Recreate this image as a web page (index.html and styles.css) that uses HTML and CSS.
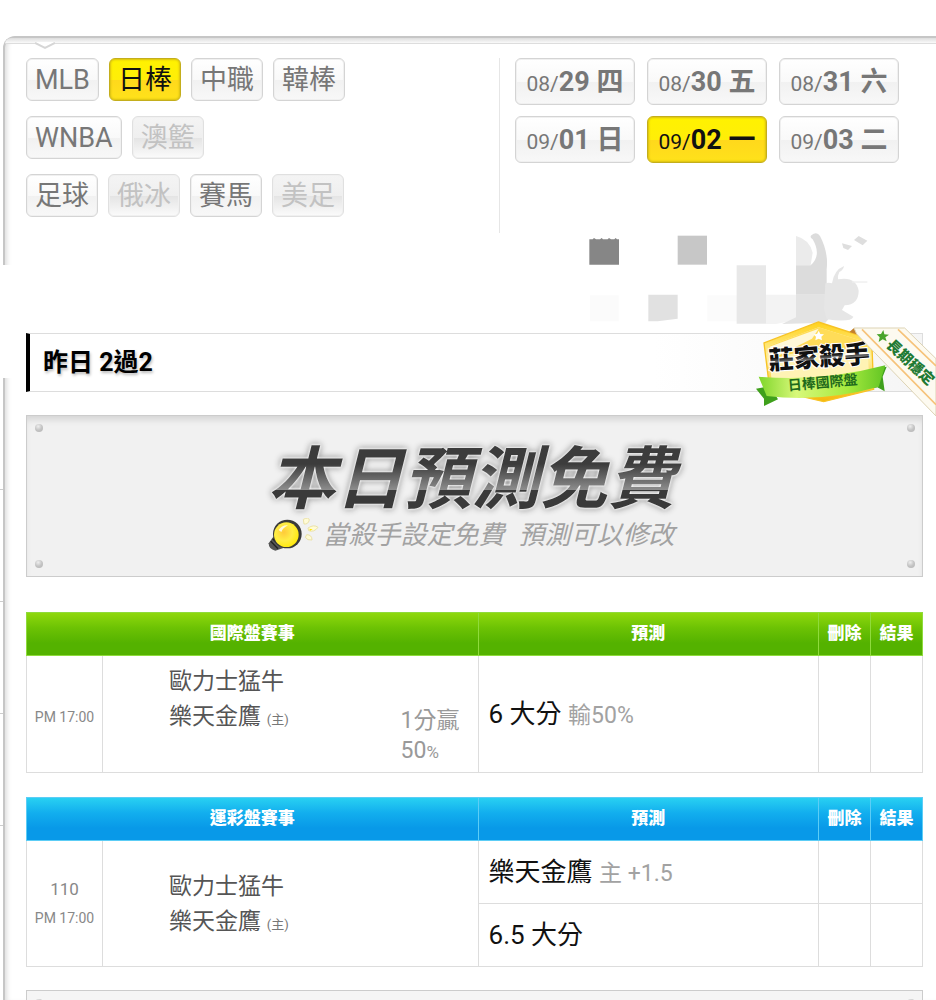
FILE: index.html
```
<!DOCTYPE html>
<html lang="zh-Hant">
<head>
    <meta charset="UTF-8">
    <meta name="viewport" content="width=device-width, initial-scale=1.0">
    <title>日棒 預測</title>
    <link rel="stylesheet" href="styles.css">
</head>
<body>

<div class="page">
    <div class="rail">
        <div class="rail-top"></div>
        <div class="rail-active"></div>
        <div class="rail-item"></div>
        <div class="rail-item"></div>
        <div class="rail-item"></div>
        <div class="rail-item"></div>
    </div>

    <main class="panel">
        <div class="panel-edge">
            <svg class="notch" width="20" height="8" viewBox="0 0 20 8"><path d="M0 0h20L10 6z" fill="#fff"/><path d="M0 1l10 5 10-5" fill="none" stroke="#d6d6d6" stroke-width="2"/></svg>
        </div>

        <div class="content">
            <div class="filters">
                <div class="sports">
                    <div class="sport-row">
                        <button class="tag">MLB</button>
                        <button class="tag active">日棒</button>
                        <button class="tag">中職</button>
                        <button class="tag">韓棒</button>
                    </div>
                    <div class="sport-row">
                        <button class="tag">WNBA</button>
                        <button class="tag" disabled>澳籃</button>
                    </div>
                    <div class="sport-row">
                        <button class="tag">足球</button>
                        <button class="tag" disabled>俄冰</button>
                        <button class="tag">賽馬</button>
                        <button class="tag" disabled>美足</button>
                    </div>
                </div>
                <div class="dates">
                    <button class="date"><span>08/</span>29 四</button>
                    <button class="date"><span>08/</span>30 五</button>
                    <button class="date"><span>08/</span>31 六</button>
                    <button class="date"><span>09/</span>01 日</button>
                    <button class="date active"><span>09/</span>02 一</button>
                    <button class="date"><span>09/</span>03 二</button>
                </div>
            </div>

            <div class="author">
                <svg width="353" height="100" viewBox="0 39 1059 300">
                    <path d="M58 58h10l4-4 6 4h12l5-4 4 4h14l4-4 6 4h10l4-4 4 4h6v76H58z" fill="#868686"/>
                    <path d="M323 47h88v87h-88z" fill="#c7c7c7"/>
                    <path d="M60 226h86v78H60z" fill="#fbfbfb"/>
                    <path d="M412 226h90v78h-90z" fill="#fbfbfb"/>
                    <path d="M235 224h88v72l-60 8h-28z" fill="#e1e1e1"/>
                    <path d="M500 136h88v175h-88z" fill="#e8e8e8"/>
                    <path d="M588 224h90v76l-60 12h-30z" fill="#f3f3f3"/>
                    <path d="M678 48q40 10 50 50l-6 37h-44z" fill="#ebebeb"/>
                    <path d="M724 46q16-14 26 2 26 50 20 100v76h-92v-88h44q34-30 6-78-10-6-4-12z" fill="#dcdcdc"/>
                    <path d="M678 224h88v40l26 14-26 30-130 4 42-20z" fill="#e3e3e3"/>
                    <path d="M766 190q10-4 20 0 6-40 36-52-2 12-14 18-6 12-4 22 54-10 62 34 0 42-42 44l-8 14 34 20q-6 18-80 8l-8-30z" fill="#e6e6e6"/>
                    <path d="M816 70l30 8-12 12-14-6zM852 60l14-12 26 14-14 14z" fill="#dedede"/>
                    <path d="M846 184h46v4h-46z" fill="#eee"/>
                </svg>
            </div>

            <div class="record">
                <h2>昨日 2過2</h2>
                <svg class="badge" width="196" height="110" viewBox="0 0 588 330">
                    <defs>
                        <linearGradient id="gold" x1="0" y1="0" x2="0" y2="1">
                            <stop offset="0" stop-color="#ffd21c"/>
                            <stop offset="0.45" stop-color="#fff0a0"/>
                            <stop offset="1" stop-color="#f5b70a"/>
                        </linearGradient>
                        <linearGradient id="leaf" x1="0" y1="0" x2="1" y2="0">
                            <stop offset="0" stop-color="#7fd62a"/>
                            <stop offset="0.3" stop-color="#d8f87a"/>
                            <stop offset="0.7" stop-color="#a6ea3e"/>
                            <stop offset="1" stop-color="#62c524"/>
                        </linearGradient>
                        <linearGradient id="ink" x1="0" y1="0" x2="0" y2="1">
                            <stop offset="0.5" stop-color="#111"/>
                            <stop offset="0.62" stop-color="#777"/>
                            <stop offset="0.64" stop-color="#111"/>
                        </linearGradient>
                    </defs>
                    <path d="M48 236l42-8 24 40-42 20v-22z" fill="#3fa01c"/>
                    <path d="M440 170l-12 30 6 44-22-12-20 4 10-60z" fill="#3fa01c"/>
                    <path d="M235 36l160 52 6 150-150 37-162-38-17-138z" fill="url(#gold)" stroke="#f7c325" stroke-width="4"/>
                    <path d="M236 52l146 46 6 120-292 10-10-120z" fill="#fff3b4"/>
                    <path d="M236 52l146 46 2 40q-100-50-290 10l-8-40z" fill="#ffdc58"/>
                    <path d="M236 56l-20 30-120 60-8-36z" fill="#fff8d8"/>
                    <path d="M236 62l5 10 11 1-8 7 2 11-10-5-10 5 2-11-8-7 11-1z" fill="#fff"/>
                    <g transform="rotate(-4 238 150)">
                        <text class="badge-title" x="238" y="168">莊家殺手</text>
                    </g>
                    <path d="M56 200q190 16 380-34l-20 64q-170 48-336 28z" fill="url(#leaf)"/>
                    <g transform="rotate(-5 250 218)">
                        <text class="badge-sub" x="248" y="232">日棒國際盤</text>
                    </g>
                    <path d="M328 66l14-12h40l-16 24z" fill="#c4802c"/>
                    <path d="M342 54h152l94 92v172L350 72z" fill="#fdfaf0" stroke="#ddd3b4" stroke-width="3"/>
                    <path d="M366 58l222 226M474 58l114 110" fill="none" stroke="#f6c37a" stroke-width="5"/>
                    <path d="M430 60l3 13 14 1-11 8 4 12-12-6-12 8 3-14-9-9 13-1z" fill="#4aa52c"/>
                    <g transform="rotate(43 512 156)">
                        <text class="badge-side" x="512" y="172">長期穩定</text>
                    </g>
                </svg>
            </div>

            <section class="board">
                <i class="screw top left"></i>
                <i class="screw top right"></i>
                <i class="screw bottom left"></i>
                <i class="screw bottom right"></i>
                <h1>本日預測免費</h1>
                <div class="note">
                    <svg width="52" height="34" viewBox="0 0 156 102">
                        <defs>
                            <radialGradient id="bulb" cx="0.4" cy="0.4" r="0.7">
                                <stop offset="0" stop-color="#ffca3a"/>
                                <stop offset="0.5" stop-color="#ffee45"/>
                                <stop offset="1" stop-color="#ffe800"/>
                            </radialGradient>
                        </defs>
                        <path d="M16 56L2 76q0 18 20 22l24-8z" fill="#555"/>
                        <path d="M8 70l22 22M14 62l22 22" stroke="#222" stroke-width="4"/>
                        <circle cx="58" cy="48" r="43" fill="#3a3a3a"/>
                        <circle cx="55" cy="50" r="37" fill="url(#bulb)"/>
                        <path d="M32 36q10-16 28-14-16 8-20 20z" fill="#fff" opacity="0.8"/>
                        <path d="M106 4q16-8 18 2-4 14-16 12zM120 30q18-12 30-2-12 16-28 10zM116 50q16 0 16 16-14 2-20-8z" fill="#fffbd6" stroke="#ebe2a8" stroke-width="3"/>
                        <path d="M124 32l10 2-8 4z" fill="#ffe500"/>
                    </svg>
                    <p><span>當殺手設定免費</span><span>預測可以修改</span></p>
                </div>
            </section>

            <table class="games green">
                <colgroup>
                    <col class="col-time"><col class="col-match"><col class="col-pick"><col class="col-act"><col class="col-act">
                </colgroup>
                <thead>
                    <tr><th colspan="2">國際盤賽事</th><th>預測</th><th>刪除</th><th>結果</th></tr>
                </thead>
                <tbody>
                    <tr>
                        <td class="time">PM 17:00</td>
                        <td>
                            <div class="match">
                                <div class="teams">歐力士猛牛<br>樂天金鷹 <small>(主)</small></div>
                                <div class="spread">1分贏<br>50<small>%</small></div>
                            </div>
                        </td>
                        <td class="pick">6 大分 <span>輸50%</span></td>
                        <td></td>
                        <td></td>
                    </tr>
                </tbody>
            </table>

            <table class="games blue">
                <colgroup>
                    <col class="col-time"><col class="col-match"><col class="col-pick"><col class="col-act"><col class="col-act">
                </colgroup>
                <thead>
                    <tr><th colspan="2">運彩盤賽事</th><th>預測</th><th>刪除</th><th>結果</th></tr>
                </thead>
                <tbody>
                    <tr>
                        <td class="time" rowspan="2"><b>110</b><br>PM 17:00</td>
                        <td rowspan="2">
                            <div class="match">
                                <div class="teams">歐力士猛牛<br>樂天金鷹 <small>(主)</small></div>
                            </div>
                        </td>
                        <td class="pick">樂天金鷹 <span>主 +1.5</span></td>
                        <td></td>
                        <td></td>
                    </tr>
                    <tr>
                        <td class="pick">6.5 大分</td>
                        <td></td>
                        <td></td>
                    </tr>
                </tbody>
            </table>

            <section class="board next">
                <i class="screw top left"></i>
                <i class="screw top right"></i>
            </section>
        </div>
    </main>
</div>

</body>
</html>
```

FILE: styles.css
```
* {
    box-sizing: border-box;
}
body {
    margin: 0;
    font-family: Roboto, "Noto Sans CJK TC", sans-serif;
    background-color: #fff;
    color: #555;
}
button {
    font-family: inherit;
    cursor: pointer;
}
.page {
    display: flex;
    height: 100vh;
    padding-top: 36px;
    overflow: hidden;
}

/* left tab rail */
.rail {
    width: 3px;
    flex: none;
}
.rail-top {
    height: 229px;
}
.rail-active {
    position: relative;
    z-index: 1;
    width: 12px;
    height: 113px;
    background-color: #fff;
}
.rail-item {
    height: 112px;
    border-bottom: 1px solid #ccc;
}

.panel {
    flex: 1;
    min-width: 0;
    border-top: 2px solid #c6c6c6;
    border-left: 2px solid #c6c6c6;
    border-top-left-radius: 12px;
    box-shadow: inset 5px 0 5px -3px #ddd;
}
.panel-edge {
    position: relative;
    height: 6px;
    border-bottom: 1px solid #ddd;
    border-top-left-radius: 10px;
    background: linear-gradient(#ddd, #fafafa);
}
.notch {
    position: absolute;
    left: 30px;
    top: 4px;
}
.content {
    padding: 14px 13px 0 21px;
}

/* filters */
.filters {
    display: grid;
    grid-template-columns: 1fr 424px;
    min-height: 175px;
}
.sports {
    display: flex;
    flex-direction: column;
    gap: 15px;
}
.sport-row {
    display: flex;
    gap: 10px;
}
.tag, .date {
    border: 1px solid #d4d4d4;
    border-radius: 6px;
    background: linear-gradient(#fff, #f9f9f9 50%, #f1f1f1 51%, #f8f8f8);
    box-shadow: inset 0 0 0 1px #f0f0f0;
    color: #777;
    line-height: 1;
}
.tag {
    height: 43px;
    padding: 2px 8px 0;
    font-size: 27px;
}
.tag:disabled {
    background: linear-gradient(#f4f4f4, #efefef 50%, #e4e4e4 51%, #fbfbfb);
    border-color: #e0e0e0;
    color: #c2c2c2;
}
.dates {
    display: grid;
    grid-template-columns: repeat(3, 120px);
    grid-auto-rows: 47px;
    align-content: start;
    gap: 11px 12px;
    padding-left: 15px;
    border-left: 1px solid #e6e6e6;
}
.date {
    padding: 2px 0 0;
    font-size: 27px;
    font-weight: bold;
    white-space: nowrap;
}
.date span {
    font-size: 21px;
    font-weight: normal;
}
.tag.active, .date.active {
    background: linear-gradient(#fff200, #ffee08 50%, #ffd81c 51%, #ffe21a);
    border-color: #c4ae1c;
    box-shadow: inset 0 0 2px 1px #d8be12;
    color: #111;
}

.author {
    display: flex;
    justify-content: flex-end;
    height: 100px;
}

/* record bar */
.record {
    position: relative;
    display: flex;
    align-items: center;
    height: 59px;
    padding-left: 13px;
    border: 1px solid #ddd;
    border-left: 4px solid #000;
    background: linear-gradient(90deg, #fff 70%, #f5f5f5);
}
.record h2 {
    margin: 0;
    font-size: 25px;
    line-height: 36px;
    color: #000;
    text-shadow: 1px 2px 3px #bbb;
}
.badge {
    position: absolute;
    right: -14px;
    top: -24px;
}
.badge text {
    font-family: "Noto Sans CJK TC", sans-serif;
    text-anchor: middle;
}
.badge-title {
    font-size: 76px;
    font-weight: 900;
    fill: url(#ink);
    stroke: #fff;
    stroke-width: 6px;
    paint-order: stroke;
}
.badge-sub {
    font-size: 42px;
    font-weight: bold;
    fill: #1f6a1c;
}
.badge-side {
    font-size: 44px;
    font-weight: 900;
    fill: #1f7a34;
}

/* notice board */
.board {
    position: relative;
    height: 162px;
    margin-top: 23px;
    padding: 24px 6px 0 0;
    border: 1px solid #ccc;
    background-color: #f1f1f1;
    box-shadow: inset 0 6px 6px -2px #d6d6d6;
    text-align: center;
}
.board.next {
    background-color: #f5f5f5;
    box-shadow: none;
}
.board h1 {
    display: inline-block;
    margin: 0;
    padding: 0 8px;
    font-size: 68px;
    font-weight: bold;
    font-style: italic;
    line-height: 80px;
    color: transparent;
    background: linear-gradient(#3c3c3c 30%, #8c8c8c 62%, #3a3a3a 63%);
    background-clip: text;
    -webkit-background-clip: text;
    filter: drop-shadow(0 0 1px #fff) drop-shadow(0 0 1px #fff) drop-shadow(0 0 3px #888);
}
.note {
    display: flex;
    justify-content: center;
    align-items: center;
    gap: 2px;
    margin-top: -2px;
}
.note p {
    display: flex;
    gap: 14px;
    margin: 0;
    font-size: 26px;
    font-style: italic;
    line-height: 34px;
    color: #a2a2a2;
}
.screw {
    position: absolute;
    width: 8px;
    height: 8px;
    border-radius: 50%;
    background: radial-gradient(circle at 40% 30%, #eee, #c4c4c4 50%, #b4b4b4);
}
.screw.top {
    top: 8px;
}
.screw.bottom {
    bottom: 8px;
}
.screw.left {
    left: 8px;
}
.screw.right {
    right: 7px;
}

/* game tables */
.games {
    width: 100%;
    margin-top: 24px;
    border-collapse: collapse;
    table-layout: fixed;
}
.games.green {
    margin-top: 35px;
}
.col-time {
    width: 76px;
}
.col-pick {
    width: 38%;
}
.col-act {
    width: 52px;
}
.games th {
    height: 43px;
    padding: 0 0 2px;
    border: 1px solid;
    font-size: 17px;
    font-weight: 900;
    line-height: 24px;
    color: #fff;
}
.green thead tr {
    background: linear-gradient(#8fd80c, #6cc204 35%, #54b200 70%);
}
.green th {
    border-color: #8fdb3c;
}
.blue thead tr {
    background: linear-gradient(#28d0f2, #12aeee 35%, #0899e8 70%);
}
.blue th {
    border-color: #5ccdf6;
}
.games td {
    height: 63px;
    padding: 0;
    border: 1px solid #ddd;
}
.games .time {
    padding-top: 6px;
    font-size: 14px;
    line-height: 28px;
    text-align: center;
    color: #888;
}
.blue .time {
    padding-top: 0;
}
.time b {
    font-size: 17px;
    font-weight: normal;
}
.match {
    display: flex;
    justify-content: space-between;
    padding: 8px 18px 5px 66px;
}
.teams {
    font-size: 23px;
    line-height: 35px;
    color: #555;
}
.teams small {
    font-size: 13px;
    color: #777;
}
.spread {
    padding-top: 42px;
    font-size: 23px;
    line-height: 30px;
    color: #999;
}
.spread small {
    font-size: 17px;
}
.games .pick {
    padding: 0 0 6px 10px;
    font-size: 26px;
    color: #111;
}
.pick span {
    font-size: 23px;
    color: #a2a2a2;
}
```
